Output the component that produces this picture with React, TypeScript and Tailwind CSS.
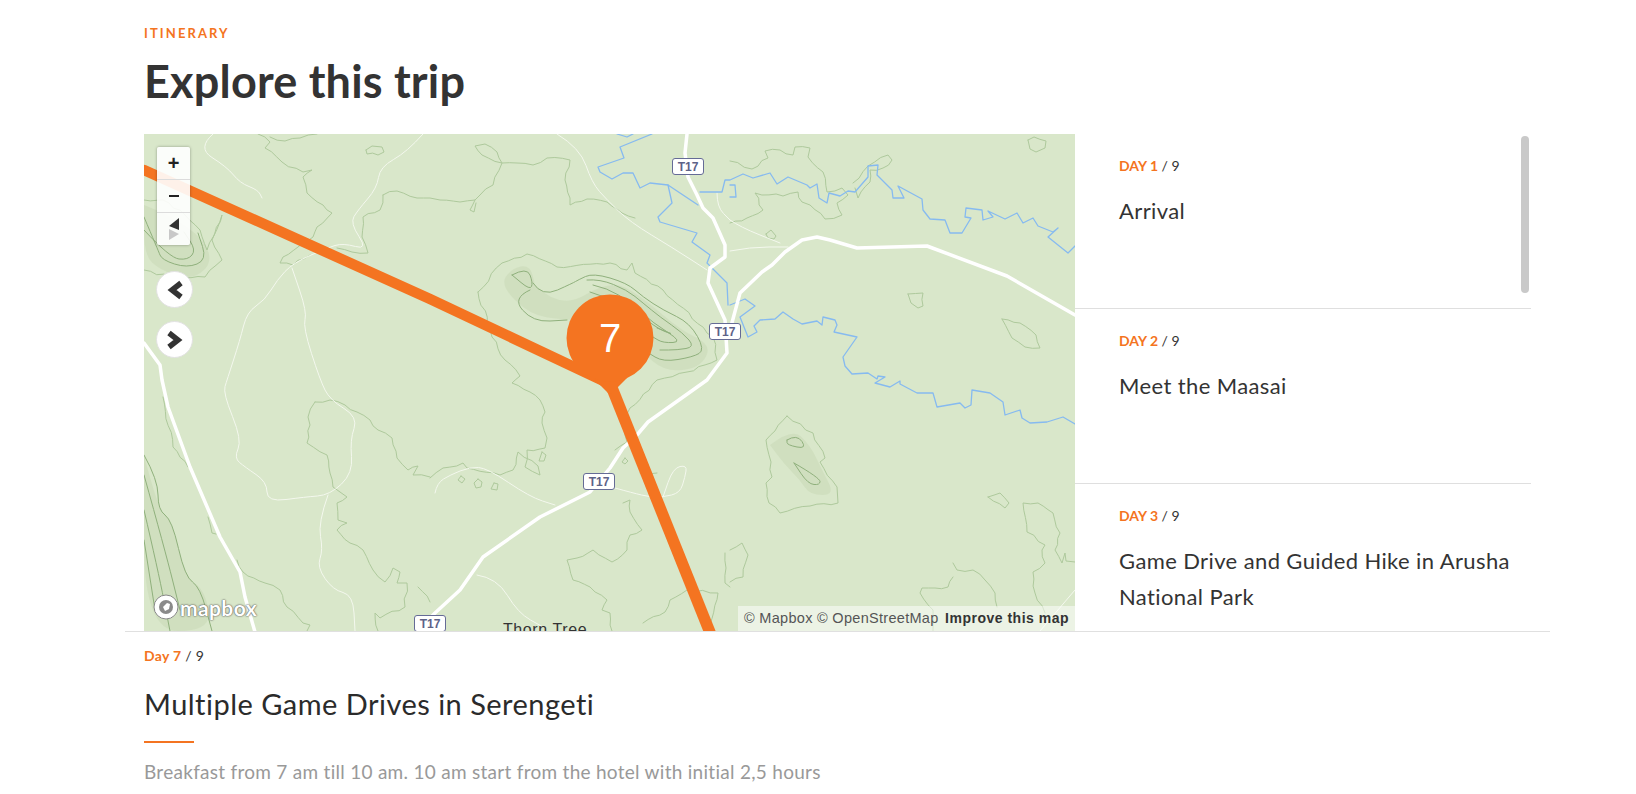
const ORANGE = '#f47421'

// map features, in page pixels (the svg viewBox starts at the map's corner)
const contours = [
  'M258 134 270 142 265 148 282 162 303 172 312 170 303 177 307 193 323 205 332 213 317 227 313 237 298 247 283 257 280 263 293 265 310 255',
  'M270 137 285 141 300 138 317 134',
  'M383 195 397 191 417 198 430 198 440 200 460 202 475 200 480 195 493 185 502 163 497 152 485 144 475 146 482 155 502 163 517 163 533 165 547 158 570 160 565 180 570 198 570 205 587 199 607 202 622 213 635 218',
  'M383 195 380 210 363 217 362 237 368 253 352 252 337 248',
  'M475 200 470 210 474 212 476 203',
  'M366 150 372 146 382 147 384 152 378 155 367 154Z',
  'M478 292 502 263 527 254 557 267 610 263 627 270 632 263 635 273 663 290 713 337 717 360 687 372 657 380 630 408 622 423 627 442 615 450',
  'M478 292 492 337 505 360 520 376 512 383 530 392 540 400 545 412 542 423 547 438 545 448 527 450 525 467 540 475 538 466 518 452 513 470 500 475 467 468 463 463 443 468 430 478',
  'M144 200 163 200 185 215 200 230 207 250 222 215 212 240 222 260 205 277 170 277 144 270',
  'M163 397 173 447 188 467',
  'M208 517 212 533 216 534',
  'M237 560 243 572 265 583 280 590 287 607 303 623 310 625 307 631',
  'M315 402 308 417 310 425 307 443 327 455 330 473 333 487 347 497 337 503 338 520 347 523 337 530 350 543 363 550 373 570 385 582 393 568 400 572 397 583 407 583 405 607 380 618 375 613 378 631',
  'M315 402 330 400 345 405 357 412 370 420 378 430 392 438 397 458 408 470 418 466 413 475 430 477',
  'M418 587 430 602',
  'M730 161 752 169 768 158 765 151 780 150 793 155 795 147 810 148 808 157 823 172 827 192 842 188 848 195 837 203 842 215 825 219 810 205 802 202 798 192 783 196 755 193 763 210 747 218 730 223',
  'M853 183 868 166 888 155 892 160 883 168 870 170 870 182 858 198 855 188',
  'M908 294 923 293 923 306 918 308 911 303Z',
  'M1002 319 1020 323 1036 335 1040 348 1025 347 1012 338Z',
  'M1028 140 1034 137 1046 141 1045 148 1036 152 1030 149Z',
  'M766 234 771 230 776 236 774 239 768 238Z',
  'M787 416 813 433 825 458 820 462 837 487 838 503 810 506 780 513 769 503 766 483 772 477 766 440Z',
  'M988 497 1000 493 1009 503 1005 508Z',
  'M1075 562 1066 561 1065 553 1062 563 1055 550 1060 533 1053 513 1038 503 1023 503 1027 532 1045 545 1042 550 1045 563 1033 572 1035 593 1045 613',
  'M953 563 957 570 973 570 985 580 995 593 997 607',
  'M953 577 948 587 922 588 920 593 933 610 933 631',
  'M730 550 742 543 748 555 743 577 730 582',
  'M623 503 630 500 630 512 642 530 630 535 627 550 612 562 593 550 577 558 567 560 573 580 590 587 607 600 602 610 610 613 612 631',
  'M643 623 665 612 670 600 687 590 718 593 708 631',
  'M725 553 725 583 730 587',
  'M640 473 657 473',
  'M461 476 465 479 462 483 458 480Z',
  'M478 479 482 482 481 487 476 488 474 483Z',
  'M494 483 498 484 497 490 491 489Z',
  'M542 452 546 455 544 461 539 461Z',
  'M625 458 628 461 625 464 622 462Z',
]

const darkContours = [
  'M512 275 527 267 533 283 530 290 512 275',
  'M530 290 512 298 533 322 567 320',
  'M533 283 542 297 573 283 578 280 593 273 627 283 643 297 663 310 690 323 705 350 693 357 663 362 647 352',
  'M587 280 600 279 627 290 643 303 660 317 683 333 695 347 677 350 660 350',
  'M593 285 607 288 630 302 653 323 683 342 663 343 653 337',
  'M590 292 607 297 637 313 660 330 675 335 657 328',
  'M787 440 797 434 807 449 787 445Z',
  'M794 463 820 478 820 485 808 484Z',
  'M144 217 158 250 162 260 187 268 207 260 198 233',
  'M144 230 170 258 188 260 196 250 184 232',
  'M144 455 158 480 158 510 172 520 185 577 200 587 212 631',
  'M144 475 165 550 180 610',
  'M144 510 158 570 170 631',
  'M144 540 155 610',
]

const tracks = [
  'M213 134 197 148 227 167 240 183 258 190 262 198',
  'M423 134 407 152 380 167 377 188 358 210 350 223 368 250 343 243 327 248 293 263 277 280 265 300 247 312 240 340 227 380 223 393 242 440 234 458 245 467 267 482 267 502 305 497 330 495 353 473 350 440 358 417 330 400 320 380 303 327 307 312 292 268',
  'M328 495 318 523 323 550 317 567 333 590 353 595 355 631',
  'M557 134 580 148 592 183 607 200 630 222 673 248 707 270',
  'M435 493 437 483 450 475 470 467 487 468 530 497 555 505',
  'M615 488 633 493 650 497 663 497 680 493 685 477 687 465 673 468 663 497',
  'M477 575 497 578 518 613 543 627',
  'M730 220 740 227 780 243',
  'M730 251 750 247 788 247',
  'M717 193 717 207 730 220',
  'M1075 590 1040 631',
]

const rivers = [
  'M652 134 620 147 624 158 598 167 600 172 612 179 623 173 633 173 640 188 650 183 668 185 698 205',
  'M668 185 672 203 658 217 660 222 697 233 692 242 710 255 707 263 712 268 727 283 728 305',
  'M617 134 627 137 633 134',
  'M700 192 722 192 725 180 730 180 743 174 753 178 770 173 777 184 788 177 807 185 810 188 817 184 819 198 827 203 829 193 840 196 848 191 855 192 868 177 868 166 878 165 877 175 892 190 893 198 904 198 898 186 922 199 923 210 930 219 945 220 950 233 962 233 971 218 965 217 966 208 982 210 983 220 993 217 988 211 1005 219 1017 213 1023 223 1033 218 1038 226 1053 232 1058 228 1048 237 1068 253 1075 246',
  'M730 185 735 185 736 197 730 197',
  'M730 305 745 299 755 306 740 317 748 337 757 332 754 326 760 320 775 319 783 312 793 319 802 324 817 321 822 325 823 317 835 320 837 325 834 332 857 337 843 357 845 366 852 374 868 373 877 379 878 376 885 377 875 383 890 387 900 381 900 384 917 393 933 393 937 407 960 403 965 408 971 405 972 390 990 393 1003 402 1005 415 1020 410 1022 418 1030 423 1047 422 1063 417 1075 424',
]

const roads = [
  'M687 134 685 153 688 177 697 195 703 208 713 218 725 245 725 257 710 268 708 283 725 320 727 353 707 380 648 422 637 435 623 448 610 468 590 492 540 517 483 557 460 590 435 613 415 633',
  'M730 330 740 293 762 272 772 265 785 252 802 240 817 237 830 240 857 248 927 246 1007 276 1075 315',
  'M144 343 160 365 162 380 168 407 190 467 220 537 240 572 245 597 255 632',
]

const shading = [
  'M535 285 560 310 610 280 640 295 680 330 712 345 700 368 665 372 640 350 600 320 565 320 530 315 500 285 512 268 530 265Z',
  'M770 445 792 428 810 445 822 470 835 495 810 495 800 480 785 465Z',
  'M144 205 170 215 205 240 212 265 190 280 160 270 144 255Z',
  'M144 455 158 510 172 520 185 577 205 590 212 631 144 631Z',
]

const roadBadges = [
  'left-[528px] top-[24px]',
  'left-[565px] top-[189px]',
  'left-[439px] top-[339px]',
  'left-[270px] top-[481px]',
]

const days = [
  { n: 1, title: 'Arrival' },
  { n: 2, title: 'Meet the Maasai' },
  { n: 3, title: 'Game Drive and Guided Hike in Arusha National Park' },
]

function points(d: string) {
  const closed = d.endsWith('Z')
  const n = d.replace(/[MZ]/g, ' ').trim().split(/\s+/).map(Number)
  const pts: [number, number][] = []
  for (let i = 0; i < n.length; i += 2) pts.push([n[i], n[i + 1]])
  if (closed) pts.push(pts[0])
  return pts
}

// rounds the corners of a traced line
function smooth(d: string) {
  const pts = points(d)
  let out = `M${pts[0][0]} ${pts[0][1]}`
  for (let i = 1; i < pts.length - 1; i++) {
    const mx = (pts[i][0] + pts[i + 1][0]) / 2
    const my = (pts[i][1] + pts[i + 1][1]) / 2
    out += ` Q${pts[i][0]} ${pts[i][1]} ${mx} ${my}`
  }
  const last = pts[pts.length - 1]
  return `${out} L${last[0]} ${last[1]}`
}

// breaks long segments up with a small fixed jitter, contours on the map are not clean lines
function wiggle(d: string) {
  const pts = points(d)
  let out = `M${pts[0][0]} ${pts[0][1]}`
  for (let i = 1; i < pts.length; i++) {
    const [ax, ay] = pts[i - 1]
    const [bx, by] = pts[i]
    const len = Math.hypot(bx - ax, by - ay)
    const steps = Math.max(1, Math.round(len / 7))
    for (let s = 1; s < steps; s++) {
      const t = s / steps
      const r = Math.sin((ax + s) * 12.9898 + (ay + i) * 78.233) * 43758.5453
      const off = (r - Math.floor(r) - 0.5) * 3
      out += ` L${(ax + (bx - ax) * t - ((by - ay) / len) * off).toFixed(1)} ${(ay + (by - ay) * t + ((bx - ax) / len) * off).toFixed(1)}`
    }
    out += ` L${bx} ${by}`
  }
  return out
}

function RoadBadge({ pos }: { pos: string }) {
  return (
    <div className={`absolute ${pos} flex h-[17px] w-[32px] items-center justify-center rounded-[3px] border-[1.5px] border-[#656b96] bg-white font-['Liberation_Sans',sans-serif] text-[12px] font-bold text-[#5d6288]`}>
      T17
    </div>
  )
}

function MapDrawing() {
  return (
    <svg className="absolute inset-0" width="931" height="497" viewBox="144 134 931 497" fill="none" strokeLinejoin="round" strokeLinecap="round">
      {shading.map((d, i) => <path key={i} d={smooth(d)} fill="#c8d8b6" opacity="0.55" />)}
      {contours.map((d, i) => <path key={i} d={wiggle(d)} stroke="#aec99c" strokeWidth="1" />)}
      {darkContours.map((d, i) => <path key={i} d={smooth(d)} stroke="#8fb07c" strokeWidth="1" />)}
      {tracks.map((d, i) => <path key={i} d={smooth(d)} stroke="#f4f8ee" strokeWidth="1" />)}
      {rivers.map((d, i) => <path key={i} d={d} stroke="#86baf0" strokeWidth="1.3" />)}
      {roads.map((d, i) => <path key={i} d={d} stroke="#ffffff" strokeWidth="3.5" />)}
      <path d="M144 170 430 299 610 384" stroke={ORANGE} strokeWidth="10.5" />
      <path d="M612 388 713 640" stroke={ORANGE} strokeWidth="11.5" strokeLinecap="butt" />
      <path d="M593 378 608 393Q610 395 612 393L627 378Z" fill={ORANGE} />
      <circle cx="610" cy="338" r="43.5" fill={ORANGE} />
    </svg>
  )
}

function ZoomControls() {
  return (
    <div className="absolute left-[13px] top-[13px] flex w-[33px] flex-col rounded-[2px] bg-[#ffffff]/90 shadow-[0_0_3px_rgba(0,0,0,0.35)]">
      <div className="flex h-[33px] items-center justify-center border-b border-[#dcdcdc] font-['Liberation_Sans',sans-serif] text-[20px] font-bold text-[#222]">+</div>
      <div className="flex h-[33px] items-center justify-center border-b border-[#dcdcdc]">
        <div className="h-[2.5px] w-[10px] bg-[#222]" />
      </div>
      <div className="flex h-[32px] items-center justify-center">
        <svg width="12" height="24" viewBox="0 0 12 24">
          <path d="M11 1V13L1 9Z" fill="#333" />
          <path d="M1 12V23L11 17Z" fill="#c8c8c8" />
        </svg>
      </div>
    </div>
  )
}

function NavButton({ dir }: { dir: 'prev' | 'next' }) {
  return (
    <div className="flex h-[37px] w-[37px] items-center justify-center rounded-full border border-[#e2e2e2] bg-white">
      <svg width="18" height="20" viewBox="0 0 18 20" fill="none">
        <path d={dir === 'prev' ? 'M15 3 6 10 15 17' : 'M3 3 12 10 3 17'} stroke="#333" strokeWidth="5.5" />
      </svg>
    </div>
  )
}

function TripMap() {
  return (
    <div className="relative h-[497px] w-[931px] shrink-0 overflow-hidden bg-[#d9e7ca]">
      <MapDrawing />
      {roadBadges.map((pos) => <RoadBadge key={pos} pos={pos} />)}
      <div className="absolute left-[359px] top-[486px] whitespace-nowrap font-['Liberation_Sans',sans-serif] text-[16px] leading-[20px] tracking-[0.6px] text-[#333]">Thorn Tree</div>
      <div className="absolute left-[426px] top-[177px] flex h-[54px] w-[80px] items-center justify-center font-['Liberation_Sans',sans-serif] text-[40px] leading-none text-white">7</div>
      <ZoomControls />
      <div className="absolute left-[12px] top-[137px] flex flex-col gap-[13px]">
        <NavButton dir="prev" />
        <NavButton dir="next" />
      </div>
      {/* mapbox logo */}
      <div className="absolute bottom-[11px] left-[9px] flex items-center gap-[1px]">
        <svg width="26" height="26" viewBox="0 0 26 26">
          <circle cx="13" cy="13" r="12" fill="#fff" stroke="#888" strokeWidth="1" />
          <circle cx="13" cy="13" r="7" fill="#8a8a8a" />
          <path d="M10 13 14 9 17 10 16 15 12 17Z" fill="#fff" />
        </svg>
        <span className="font-['Lato',sans-serif] text-[21px] font-bold leading-none tracking-[0.4px] text-white [text-shadow:0_0_1.5px_#555,0_0_1.5px_#555]">mapbox</span>
      </div>
      <div className="absolute bottom-0 right-0 flex h-[25px] w-[337px] items-center justify-between bg-[#ffffff]/50 pl-[6px] pr-[6px] font-['Liberation_Sans',sans-serif]">
        <span className="text-[14.5px] tracking-[0.3px] text-[#555]">© Mapbox © OpenStreetMap</span>
        <span className="text-[14px] font-bold tracking-[0.5px] text-[#333]">Improve this map</span>
      </div>
    </div>
  )
}

function DayList() {
  return (
    <div className="relative h-[497px] w-[456px] overflow-hidden">
      {days.map((d) => (
        <div key={d.n} className="h-[175px] border-b border-[#dfdfdf] pl-[44px] pr-[16px] pt-[23px]">
          <p className="text-[14px] leading-[18px] text-[#333]">
            <span className="font-bold text-[#f47421]">DAY {d.n}</span> / 9
          </p>
          <p className="mt-[18px] text-[22px] leading-[36px] tracking-[0.39px] text-[#333]">{d.title}</p>
        </div>
      ))}
      <div className="absolute right-[2px] top-[2px] h-[157px] w-[8px] rounded-[4px] bg-[#c9c9c9]" />
    </div>
  )
}

export default function App() {
  return (
    <div className="h-[794px] w-[1636px] overflow-hidden bg-white font-['Lato',sans-serif]">
      <div className="mx-[125px] w-[1425px]">
        <div className="h-[134px] px-[19px] pt-[25px]">
          <p className="text-[13px] font-bold leading-[16px] tracking-[2.1px] text-[#f47421]">ITINERARY</p>
          <h1 className="mt-[12px] text-[45px] font-bold leading-[56px] tracking-[0.2px] text-[#333]">Explore this trip</h1>
        </div>
        <div className="flex px-[19px]">
          <TripMap />
          <DayList />
        </div>
        <div className="border-t border-[#e0e0e0] px-[19px] pt-[15px]">
          <p className="text-[14px] leading-[18px] tracking-[0.3px] text-[#333]">
            <span className="font-bold text-[#f47421]">Day 7</span> / 9
          </p>
          <h2 className="mt-[20px] text-[29px] leading-[38px] tracking-[0.48px] text-[#2b2b2b]">Multiple Game Drives in Serengeti</h2>
          <div className="mt-[18px] h-[2px] w-[50px] bg-[#f47421]" />
          <p className="mt-[15px] text-[19px] leading-[28px] tracking-[0.28px] text-[#999]">Breakfast from 7 am till 10 am. 10 am start from the hotel with initial 2,5 hours</p>
        </div>
      </div>
    </div>
  )
}
